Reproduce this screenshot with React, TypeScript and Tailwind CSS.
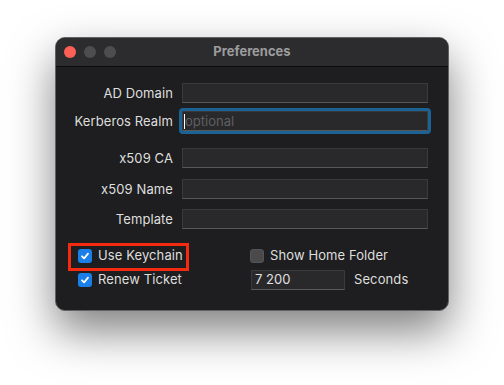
import React from "react";

const font = { fontFamily: "Inter, 'Liberation Sans', sans-serif" };

function Check({ on }: { on: boolean }) {
  if (on) {
    return (
      <div className="w-[14px] h-[14px] rounded-[3px] bg-[#1a7fe8] flex items-center justify-center shrink-0">
        <svg width="10" height="10" viewBox="0 0 10 10">
          <path d="M2 5.3 L4.1 7.4 L8 2.6" fill="none" stroke="white" strokeWidth="1.8" strokeLinecap="round" strokeLinejoin="round" />
        </svg>
      </div>
    );
  }
  return <div className="w-[14px] h-[14px] rounded-[3px] bg-[#4a4a4c] border border-[#555557] shrink-0" />;
}

function Field({ focused, children }: { focused?: boolean; children?: React.ReactNode }) {
  return (
    <div
      className={
        "w-[246px] h-[20px] bg-[#29292b] border border-[#3a3a3c] border-b-[#58585a] flex items-center " +
        (focused ? "outline-[3px] outline-solid outline-[#1c6395] rounded-[1px]" : "")
      }
    >
      {children}
    </div>
  );
}

function Row({ label, focused, children, mt }: { label: string; focused?: boolean; children?: React.ReactNode; mt: string }) {
  return (
    <div className={"flex items-center " + mt}>
      <div className="w-[117px] text-right text-[13px] text-[#dedede] leading-[20px] tracking-[0.1px]">{label}</div>
      <div className="ml-[9px]">
        <Field focused={focused}>{children}</Field>
      </div>
    </div>
  );
}

export default function App() {
  return (
    <div className="w-[504px] h-[385px] bg-white pt-[37px] pl-[55px]" style={font}>
      <div className="w-[394px] h-[274px] rounded-[10px] bg-[#1e1e20] border border-[#626264] shadow-[0_20px_45px_rgba(0,0,0,0.5)] overflow-hidden flex flex-col">
        <div className="h-[29px] bg-[#2c2c2e] relative flex items-center pl-[8px] gap-[8px] border-b border-[#0c0c0c] shrink-0">
          <div className="w-[12px] h-[12px] rounded-full bg-[#fe5f57]" />
          <div className="w-[12px] h-[12px] rounded-full bg-[#4d4d4f]" />
          <div className="w-[12px] h-[12px] rounded-full bg-[#4d4d4f]" />
          <div className="absolute inset-0 flex items-center justify-center text-[13px] font-bold text-[#9c9c9e]">
            Preferences
          </div>
        </div>
        <div className="flex flex-col">
          <Row label="AD Domain" mt="mt-[16px]" />
          <Row label="Kerberos Realm" focused mt="mt-[8px]">
            <div className="w-[1px] h-[15px] bg-white ml-[1px]" />
            <span className="text-[13px] text-[#5f5f61] leading-[18px]">optional</span>
          </Row>
          <Row label="x509 CA" mt="mt-[17px]" />
          <Row label="x509 Name" mt="mt-[11px]" />
          <Row label="Template" mt="mt-[10px]" />
          <div className="flex mt-[15px]">
            <div className="w-[172px] ml-[22px] flex flex-col">
              <div className="relative h-[24px] flex items-center gap-[6px]">
                <div className="absolute left-[-10px] top-[-1px] w-[121px] h-[28px] border-[3px] border-[#f42b11]" />
                <Check on />
                <span className="text-[13px] text-[#dedede] tracking-[0.1px]">Use Keychain</span>
              </div>
              <div className="h-[24px] flex items-center gap-[6px]">
                <Check on />
                <span className="text-[13px] text-[#dedede] tracking-[0.1px]">Renew Ticket</span>
              </div>
            </div>
            <div className="flex flex-col">
              <div className="h-[24px] flex items-center gap-[6px]">
                <Check on={false} />
                <span className="text-[13px] text-[#dedede] tracking-[0.1px]">Show Home Folder</span>
              </div>
              <div className="h-[24px] flex items-center">
                <div className="ml-[1px] w-[94px] h-[20px] bg-[#29292b] border border-[#3a3a3c] border-b-[#58585a] flex items-center pl-[3px] text-[13px] text-[#e0e0e0]">
                  7 200
                </div>
                <span className="ml-[9px] text-[13px] text-[#dedede] tracking-[0.1px]">Seconds</span>
              </div>
            </div>
          </div>
        </div>
      </div>
    </div>
  );
}
